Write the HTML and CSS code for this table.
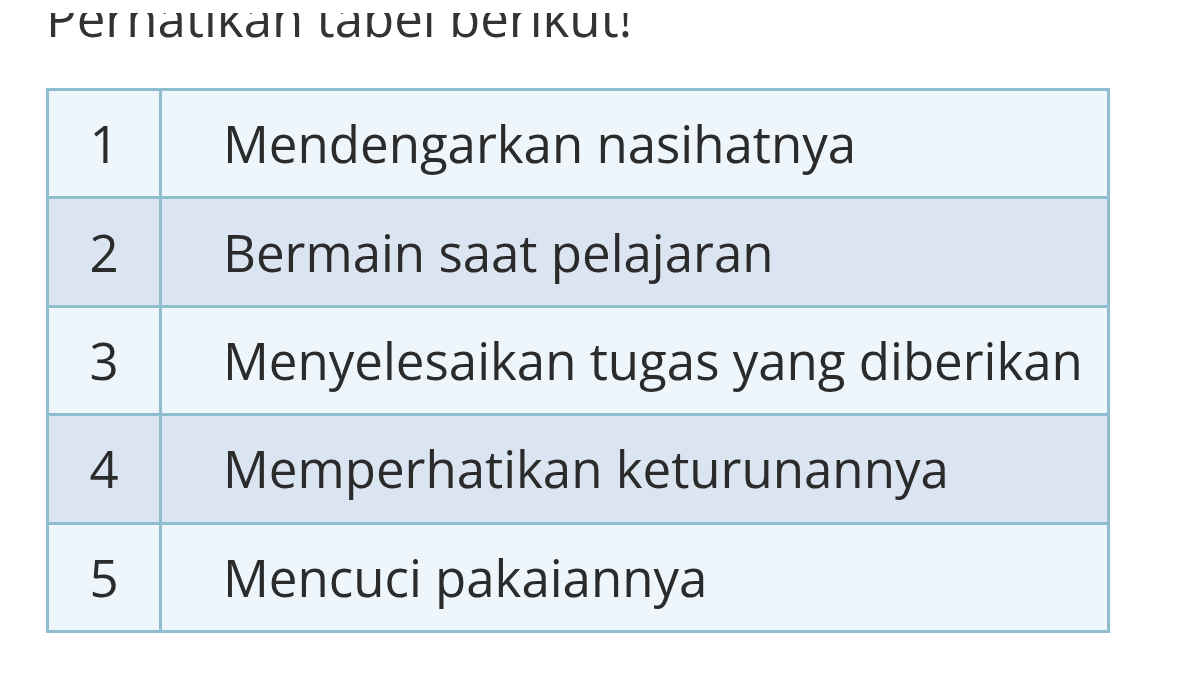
FILE: index.html
```html
<!DOCTYPE html>
<html>
<head>
<meta charset="utf-8">
<link rel="stylesheet" href="styles.css">
</head>
<body>
<div class="page">
  <div class="intro"><p class="intro-text">Perhatikan tabel berikut!</p></div>
  <table class="list">
    <tr class="odd"><td class="num">1</td><td class="txt">Mendengarkan nasihatnya</td></tr>
    <tr class="even"><td class="num">2</td><td class="txt">Bermain saat pelajaran</td></tr>
    <tr class="odd"><td class="num">3</td><td class="txt">Menyelesaikan tugas yang diberikan</td></tr>
    <tr class="even"><td class="num">4</td><td class="txt">Memperhatikan keturunannya</td></tr>
    <tr class="odd"><td class="num">5</td><td class="txt">Mencuci pakaiannya</td></tr>
  </table>
</div>
</body>
</html>
```

FILE: styles.css
```css
html, body {
  margin: 0;
  padding: 0;
  background: #ffffff;
}
.page {
  padding-left: 46px;
  padding-top: 13px;
  font-family: "Open Sans", "Noto Sans", sans-serif;
  color: #2b2b2b;
}
.intro {
  height: 25px;
  overflow: hidden;
  margin-bottom: 50px;
}
.intro-text {
  margin: -26px 0 0 0;
  font-size: 51px;
  line-height: 60px;
  color: #333333;
}
.list {
  border-collapse: collapse;
  width: 1064px;
  border: 3px solid #8fbfcf;
}
.list td {
  border: 3px solid #8fbfcf;
  height: 105.4px;
  padding: 0;
  font-size: 51px;
  line-height: 1;
  vertical-align: middle;
}
.list .num {
  width: 110px;
  text-align: center;
}
.list .txt {
  padding-left: 61px;
}
.odd td { background: #eef6fc; }
.even td { background: #dbe5f1; }
```
